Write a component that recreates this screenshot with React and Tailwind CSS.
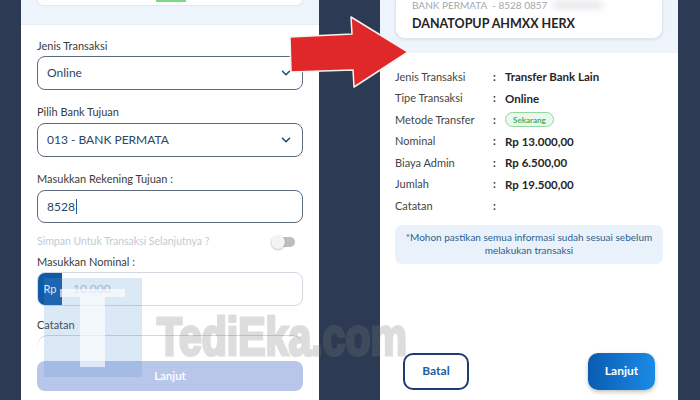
import React from "react";
import { ChevronDown } from "lucide-react";

const Label = ({ children, className = "" }) => (
  <div className={`h-[16px] leading-[16px] text-[11px] text-[#3b3b3b] ${className}`}>{children}</div>
);

const Select = ({ value }) => (
  <div className="h-[34px] rounded-[8px] border-[1.5px] border-[#5d6b7e] flex items-center justify-between pl-[9px] pr-[9px]">
    <span className="text-[12px] text-[#2a4668]">{value}</span>
    <ChevronDown size={14} strokeWidth={2.6} color="#1e4b7c" />
  </div>
);

const FormPanel = () => (
  <div className="w-[298px] h-full bg-white flex flex-col">
    <div className="h-[25px] bg-[#eef4fb] px-[16px] border-b border-[#e7edf5]">
      <div className="h-[6px] bg-white rounded-b-[10px] border-b border-x border-[#e3e8ee]">
        <div className="ml-[118px] w-[30px] h-[2px] bg-[#7dd98a]" />
      </div>
    </div>
    <div className="px-[16px] pt-[13px] flex flex-col">
      <Label>Jenis Transaksi</Label>
      <div className="mt-[2px]">
        <Select value="Online" />
      </div>
      <Label className="mt-[14px]">Pilih Bank Tujuan</Label>
      <div className="mt-[3px]">
        <Select value="013 - BANK PERMATA" />
      </div>
      <Label className="mt-[14px]">Masukkan Rekening Tujuan :</Label>
      <div className="mt-[3px] h-[33px] rounded-[8px] border-[1.5px] border-[#5d6b7e] flex items-center pl-[9px]">
        <span className="text-[12px] text-[#2a4668]">8528</span>
        <span className="w-[1.5px] h-[15px] bg-[#1d5fa8] ml-[1px]" />
      </div>
      <div className="mt-[11px] h-[16px] flex items-center justify-between pr-[8px]">
        <span className="text-[10.5px] text-[#c3c9d3]">Simpan Untuk Transaksi Selanjutnya ?</span>
        <div className="w-[24px] h-[14px] flex items-center">
          <div className="w-[24px] h-[10px] rounded-full bg-[#bdbdbd] flex items-center">
            <div className="w-[14px] h-[14px] rounded-full bg-[#f3f3f3] shadow-[0_1px_2px_rgba(0,0,0,0.25)]" />
          </div>
        </div>
      </div>
      <Label className="mt-[4px]">Masukkan Nominal :</Label>
      <div className="mt-[2px] h-[34px] rounded-[8px] border-[1.5px] border-[#d3d9e0] flex items-stretch overflow-hidden">
        <div className="w-[24px] bg-[#0e5aa6] flex items-center justify-center text-[11px] text-white">Rp</div>
        <div className="flex items-center pl-[11px] text-[12px] text-[#b9bec6]">10.000</div>
      </div>
      <Label className="mt-[11px]">Catatan</Label>
      <div className="mt-[2px] h-[14px] rounded-t-[10px] border-t-[1.5px] border-x-[1.5px] border-[#cfd5dc] [mask-image:linear-gradient(to_bottom,black,transparent)] pl-[30px] pt-[2px] text-[9px] text-[#c7ccd3] tracking-[3px]">
        ----
      </div>
      <button className="mt-[12px] h-[30px] rounded-[8px] bg-[#b8c6ea] text-white text-[11.5px] font-semibold">
        Lanjut
      </button>
    </div>
  </div>
);

const rows = [
  ["Jenis Transaksi", "Transfer Bank Lain"],
  ["Tipe Transaksi", "Online"],
  ["Metode Transfer", "badge"],
  ["Nominal", "Rp 13.000,00"],
  ["Biaya Admin", "Rp 6.500,00"],
  ["Jumlah", "Rp 19.500,00"],
  ["Catatan", ""],
];

const ConfirmPanel = () => (
  <div className="w-[298px] h-full bg-white flex flex-col">
    <div className="h-[53px] bg-[#eef4fb] px-[15px]">
      <div className="h-[39px] bg-white rounded-b-[10px] border-b border-x border-[#e1e6ec] shadow-[0_1px_3px_rgba(0,0,0,0.08)] px-[16px] overflow-hidden">
        <div className="-mt-[2px] h-[14px] leading-[14px] flex items-center text-[10px] text-[#a3a9b1]">
          <span>BANK PERMATA&nbsp;&nbsp;- 8528 0857</span>
          <span className="ml-[6px] w-[50px] h-[8px] rounded-full bg-[#e6e8eb] blur-[3px]" />
        </div>
        <div className="mt-[3px] h-[18px] leading-[18px] text-[12.5px] font-bold text-[#242424]">
          DANATOPUP AHMXX HERX
        </div>
      </div>
    </div>
    <div className="px-[15px] pt-[13px] flex flex-col">
      {rows.map(([label, value]) => (
        <div key={label} className="h-[21.5px] flex items-center">
          <span className="w-[98px] text-[11px] text-[#454545]">{label}</span>
          <span className="w-[12px] text-[11px] font-bold text-[#333]">:</span>
          {value === "badge" ? (
            <span className="h-[15px] px-[7px] rounded-full border border-[#93d7a0] bg-[#e9f8ea] text-[8px] font-bold text-[#47b065] flex items-center">
              Sekarang
            </span>
          ) : (
            <span className="text-[11.5px] font-bold text-[#262626]">{value}</span>
          )}
        </div>
      ))}
      <div className="mt-[8px] h-[39px] rounded-[7px] bg-[#e9f1fb] flex flex-col items-center justify-center text-[10px] leading-[13px] text-[#2e5f8c]">
        <span>*Mohon pastikan semua informasi sudah sesuai sebelum</span>
        <span>melakukan transaksi</span>
      </div>
      <div className="mt-[89px] px-[8px] flex justify-between">
        <button className="w-[66px] h-[37px] rounded-[10px] border-2 border-[#1f3c6e] text-[12px] font-bold text-[#1d5e9f]">
          Batal
        </button>
        <button className="w-[67px] h-[37px] rounded-[10px] bg-gradient-to-r from-[#0b5cb0] to-[#1b8be8] shadow-[0_2px_4px_rgba(0,0,0,0.25)] text-[12px] font-bold text-white">
          Lanjut
        </button>
      </div>
    </div>
  </div>
);

export default function App() {
  return (
    <div
      className="relative w-[700px] h-[400px] overflow-hidden bg-[#2c3a53] flex"
      style={{ fontFamily: "Lato, 'Noto Sans', sans-serif" }}
    >
      <div className="w-[21px]" />
      <FormPanel />
      <div className="w-[61px]" />
      <ConfirmPanel />

      {/* red arrow */}
      <svg className="absolute left-[285px] top-[12px]" width="130" height="80" viewBox="0 0 130 80">
        <polygon
          points="5,25 67,22 66,5 123,40 69,75 68,58 6,60"
          fill="#e0282b"
          stroke="#f4f4f4"
          strokeWidth="1.5"
          strokeLinejoin="round"
        />
      </svg>

      {/* watermark logo */}
      <svg className="absolute left-[44px] top-[278px]" width="98" height="99" viewBox="0 0 98 99">
        <rect x="0" y="0" width="98" height="99" fill="rgba(90,150,215,0.22)" />
        <path d="M16 11 H81 V19 H61 V89 H36 V19 H16 Z" fill="rgba(255,255,255,0.65)" />
      </svg>

      {/* watermark text */}
      <div
        className="absolute left-[157px] top-[300px] text-[41px] font-bold leading-[56px] text-[#7a7a7a] opacity-25 [-webkit-text-stroke:2.5px_#7a7a7a] scale-y-[1.3] origin-top"
        style={{ fontFamily: "'Liberation Sans', sans-serif" }}
      >
        TediEka.com
      </div>
    </div>
  );
}
